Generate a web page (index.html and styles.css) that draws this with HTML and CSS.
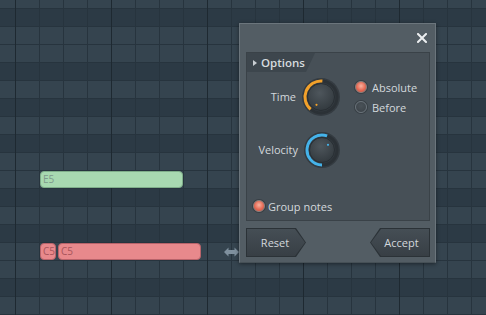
FILE: index.html
```html
<!DOCTYPE html>
<html lang="en">
<head>
    <meta charset="UTF-8">
    <title>Quantize</title>
    <link rel="stylesheet" href="styles.css">
</head>
<body>
<div class="roll">
    <!-- notes -->
    <div class="note green" style="left: 40px; top: 171px; width: 143px;">E5</div>
    <div class="note pink" style="left: 40px; top: 243px; width: 16px;">C5</div>
    <div class="note pink" style="left: 58px; top: 243px; width: 143px;">C5</div>

    <svg class="handle" width="15" height="10" viewBox="0 0 15 10">
        <path d="M0 5 L4.5 0.5 L4.5 3 L10.5 3 L10.5 0.5 L15 5 L10.5 9.5 L10.5 7 L4.5 7 L4.5 9.5 Z" fill="#7f909e"/>
    </svg>

    <!-- dialog -->
    <div class="dialog">
        <div class="head">
            <svg class="close" width="10" height="10" viewBox="0 0 10 10">
                <path d="M1 1 L9 9 M9 1 L1 9" stroke="#eceef0" stroke-width="2" stroke-linecap="square"/>
            </svg>
        </div>

        <div class="panel">
            <div class="tab">
                <span class="arrow"></span>
                <span>Options</span>
            </div>

            <div class="row time">
                <label>Time</label>
                <svg class="knob" width="38" height="38" viewBox="0 0 38 38">
                    <defs>
                        <radialGradient id="kb1" cx="45%" cy="35%" r="70%">
                            <stop offset="0" stop-color="#4e565c"/>
                            <stop offset="1" stop-color="#31383d"/>
                        </radialGradient>
                    </defs>
                    <circle cx="19" cy="19" r="19" fill="#343b41"/>
                    <circle cx="19" cy="19" r="16" fill="none" stroke="#2b3136" stroke-width="3"/>
                    <path d="M8.72 31.26 A16 16 0 0 1 20.39 3.06" fill="none" stroke="#f2a12b" stroke-width="3"/>
                    <circle cx="19" cy="19" r="13.5" fill="url(#kb1)" stroke="#282e33" stroke-width="1"/>
                    <circle cx="14.5" cy="26.8" r="1.1" fill="#f2a12b"/>
                </svg>
                <div class="radios">
                    <div class="opt"><span class="radio on"></span>Absolute</div>
                    <div class="opt"><span class="radio"></span>Before</div>
                </div>
            </div>

            <div class="row vel">
                <label>Velocity</label>
                <svg class="knob" width="36" height="36" viewBox="0 0 36 36">
                    <defs>
                        <radialGradient id="kb2" cx="45%" cy="35%" r="70%">
                            <stop offset="0" stop-color="#4e565c"/>
                            <stop offset="1" stop-color="#31383d"/>
                        </radialGradient>
                    </defs>
                    <circle cx="18" cy="18" r="18" fill="#343b41"/>
                    <circle cx="18" cy="18" r="15" fill="none" stroke="#2b3136" stroke-width="3"/>
                    <path d="M18 33 A15 15 0 1 1 23.13 3.9" fill="none" stroke="#45b3ea" stroke-width="3"/>
                    <circle cx="18" cy="18" r="12.5" fill="url(#kb2)" stroke="#282e33" stroke-width="1"/>
                    <circle cx="24" cy="12.8" r="1.1" fill="#45b3ea"/>
                </svg>
            </div>

            <div class="opt group"><span class="radio on"></span>Group notes</div>
        </div>

        <div class="buttons">
            <div class="btn reset"><span>Reset</span></div>
            <div class="btn accept"><span>Accept</span></div>
        </div>
    </div>
</div>
</body>
</html>
```

FILE: styles.css
```css
* {
    box-sizing: border-box;
}
html, body {
    margin: 0;
}
body {
    width: 486px;
    height: 315px;
    overflow: hidden;
    font-family: "Open Sans", "Noto Sans", sans-serif;
    font-size: 11px;
    color: #d3d8dc;
}

/* piano roll grid */
.roll {
    position: relative;
    width: 486px;
    height: 315px;
    background:
        linear-gradient(to right, #1e2931 0 1px, transparent 1px) 15px 0 / 96px 100%,
        linear-gradient(to right, #27343e 0 1px, transparent 1px) 15px 0 / 24px 100%,
        linear-gradient(to bottom, #27343e 0 1px, transparent 1px) 0 8px / 100% 18px,
        linear-gradient(to bottom,
            #2c3a45 0 18px,
            #35444f 18px 54px,
            #2c3a45 54px 72px,
            #35444f 72px 90px,
            #2c3a45 90px 108px,
            #35444f 108px 126px,
            #2c3a45 126px 144px,
            #35444f 144px 180px,
            #2c3a45 180px 198px,
            #35444f 198px 216px) 0 8px / 100% 216px;
}

.note {
    position: absolute;
    height: 17px;
    border-radius: 4px;
    font-size: 10px;
    line-height: 15px;
    padding-left: 2px;
    overflow: hidden;
}
.note.green {
    background: #a8d9b1;
    border: 1px solid #7fae8a;
    color: #7f9a8c;
}
.note.pink {
    background: #e8898c;
    border: 1px solid #b8636a;
    color: #a9555b;
}

.handle {
    position: absolute;
    left: 224px;
    top: 247px;
}

/* dialog */
.dialog {
    position: absolute;
    left: 239px;
    top: 23px;
    width: 197px;
    height: 240px;
    background: #535d64;
    border: 1px solid #6b757c;
    border-bottom-color: #465056;
    box-shadow: 0 1px 4px rgba(0, 0, 0, .45);
    padding: 0 5px 5px 6px;
    display: flex;
    flex-direction: column;
}
.head {
    height: 28px;
    display: flex;
    justify-content: flex-end;
    align-items: center;
    padding-right: 3px;
}

.panel {
    height: 169px;
    background: #475057;
    border: 1px solid #3a4248;
    display: flex;
    flex-direction: column;
}
.tab {
    width: 68px;
    height: 19px;
    background: #3d464d;
    clip-path: polygon(0 0, 100% 0, calc(100% - 9px) 100%, 0 100%);
    display: flex;
    align-items: center;
    padding-left: 6px;
    font-weight: 600;
    font-size: 11.5px;
    color: #d6dbdf;
}
.arrow {
    width: 0;
    height: 0;
    border-left: 4px solid #c9ced2;
    border-top: 3.5px solid transparent;
    border-bottom: 3.5px solid transparent;
    margin-right: 4px;
}

.row {
    display: flex;
    align-items: center;
}
.row label {
    text-align: right;
    margin-right: 6px;
}
.time {
    margin-top: 6px;
}
.time label {
    width: 49px;
    margin-top: -2px;
}
.vel {
    margin-top: 16px;
}
.vel label {
    width: 51px;
    margin-top: -2px;
}

.radios {
    display: flex;
    flex-direction: column;
    gap: 8px;
    margin-left: 15px;
}
.opt {
    display: flex;
    align-items: center;
    gap: 5px;
    height: 12px;
}
.radio {
    width: 12px;
    height: 12px;
    border-radius: 50%;
    border: 1.5px solid #6a737a;
    background: radial-gradient(circle at 50% 40%, #4a5258, #394046);
    box-shadow: 0 0 0 1px #383f45;
}
.radio.on {
    border-color: #8e807c;
    background: radial-gradient(circle at 50% 40%, #f8b2a0, #e56a55 55%, #c94a3a);
}
.group {
    margin-top: auto;
    margin-bottom: 8px;
    padding-left: 6px;
    gap: 3px;
}

/* buttons */
.buttons {
    margin-top: 7px;
    height: 29px;
    display: flex;
    justify-content: space-between;
}
.btn {
    position: relative;
    width: 60px;
    height: 29px;
    background: #2b3237;
    display: flex;
    align-items: center;
    justify-content: center;
    color: #d3d8dc;
}
.btn::before {
    content: "";
    position: absolute;
    inset: 1px;
    background: linear-gradient(#454e55, #383f45);
}
.btn span {
    position: relative;
}
.reset, .reset::before {
    clip-path: polygon(0 0, calc(100% - 10px) 0, 100% 50%, calc(100% - 10px) 100%, 0 100%);
}
.reset span {
    margin-right: 2px;
}
.accept, .accept::before {
    clip-path: polygon(10px 0, 100% 0, 100% 100%, 10px 100%, 0 50%);
}
.accept span {
    margin-left: 3px;
}
```
